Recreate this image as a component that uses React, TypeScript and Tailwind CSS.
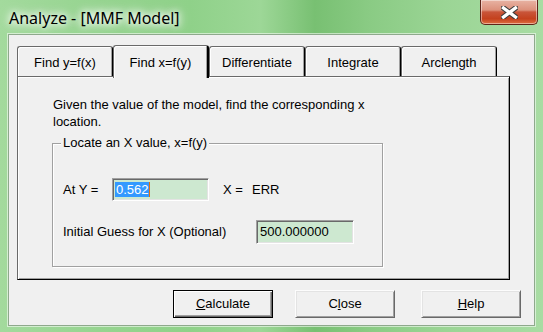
import React from 'react'

const tabs = ['Find y=f(x)', 'Find x=f(y)', 'Differentiate', 'Integrate', 'Arclength']

const CloseGlyph = () => (
  <svg width="17" height="13" viewBox="0 0 17 13">
    <path d="M2.5 2 L14.5 11 M14.5 2 L2.5 11" stroke="#3b3b3b" strokeWidth="5.4" strokeLinecap="square" />
    <path d="M2.5 2 L14.5 11 M14.5 2 L2.5 11" stroke="#ffffff" strokeWidth="3.4" strokeLinecap="square" />
  </svg>
)

const Tab = ({ label, active }: { label: string; active: boolean }) => {
  if (active) {
    return (
      <div className="relative z-10 flex h-[33px] w-[96px] mb-[-2px] items-start justify-center rounded-t-[3px] border-l border-t border-r-2 border-l-[#6a6a6a] border-t-[#6a6a6a] border-r-black bg-[#f0f0f0] pt-[7px] shadow-[inset_1px_1px_0_#fff,inset_-1px_0_0_#a0a0a0]">
        {label}
      </div>
    )
  }
  return (
    <div className="flex h-[30px] w-[96px] items-start justify-center rounded-t-[3px] border-l border-t border-r border-l-[#6a6a6a] border-t-[#6a6a6a] border-r-black bg-[#f0f0f0] pt-[6px] shadow-[inset_1px_1px_0_#fff,inset_-1px_0_0_#a0a0a0]">
      {label}
    </div>
  )
}

const Field = ({ children, className }: { children: React.ReactNode; className: string }) => (
  <div className={`flex items-center border border-t-[#a0a0a0] border-l-[#a0a0a0] border-r-white border-b-white bg-[#cde8d0] pl-[2px] shadow-[inset_1px_1px_0_#696969,inset_-1px_-1px_0_#e3e3e3] ${className}`}>
    {children}
  </div>
)

const Button = ({ children, isDefault }: { children: React.ReactNode; isDefault?: boolean }) => (
  <div
    className={
      isDefault
        ? 'flex h-[28px] w-[100px] items-center justify-center border border-black bg-[#f0f0f0] shadow-[inset_1px_1px_0_#fff,inset_-1px_-1px_0_#696969,inset_-2px_-2px_0_#a0a0a0]'
        : 'flex h-[28px] w-[100px] items-center justify-center border border-t-[#fcfcfc] border-l-[#fcfcfc] border-r-[#696969] border-b-[#696969] bg-[#f0f0f0] shadow-[inset_1px_1px_0_#e3e3e3,inset_-1px_-1px_0_#a0a0a0]'
    }
  >
    {children}
  </div>
)

export default function App() {
  return (
    <div className="flex h-[332px] w-[543px] flex-col bg-[linear-gradient(90deg,#a3da9d_0%,#96d490_18%,#8fd189_35%,#9dd797_48%,#78c072_58%,#8acb84_68%,#9bd595_82%,#a8dca3_100%)] font-['Liberation_Sans',Arial,sans-serif] text-[13px] text-black">
      {/* title bar */}
      <div className="flex h-[34px] items-start justify-between">
        <div className="pl-[9px] pt-[8px] font-['Noto_Sans',sans-serif] text-[16px] leading-[20px] text-black [text-shadow:0_0_6px_#fff,0_0_10px_#fff,0_0_14px_#fff]">
          Analyze - [MMF Model]
        </div>
        <div className="mr-[5px] flex h-[25px] w-[58px] items-center justify-center rounded-b-[5px] border border-t-0 border-[#5e2419] bg-[linear-gradient(to_bottom,#e8b3a4_0%,#dc907b_42%,#c9553a_50%,#c4411e_78%,#de6e40_100%)] shadow-[inset_0_0_0_1px_rgba(255,255,255,0.45)]">
          <CloseGlyph />
        </div>
      </div>

      {/* client area */}
      <div className="mx-[8px] mb-[6px] h-[292px] border border-[#8ea98c] bg-[#f0f0f0] pl-[8px] pt-[11px] shadow-[0_0_0_1px_rgba(255,255,255,0.55)]">
        <div className="flex h-[30px] items-end">
          {tabs.map((t) => (
            <Tab key={t} label={t} active={t === 'Find x=f(y)'} />
          ))}
        </div>

        <div className="h-[204px] w-[493px] border border-t-[#6a6a6a] border-l-[#6a6a6a] border-r-black border-b-black bg-[#f0f0f0] pt-[19px] shadow-[inset_1px_1px_0_#fff,inset_-1px_-1px_0_#a0a0a0]">
          <p className="ml-[35px] leading-[17px]">
            Given the value of the model, find the corresponding x
            <br />
            location.
          </p>

          <div className="relative ml-[34px] mt-[13px] h-[124px] w-[331px] border border-[#a0a0a0] pt-[34px] pl-[10px] shadow-[inset_1px_1px_0_#fff,1px_1px_0_#fff]">
            <span className="absolute -top-[10px] left-[8px] bg-[#f0f0f0] px-[2px] leading-[17px]">
              Locate an X value, x=f(y)
            </span>

            <div className="flex h-[23px] items-center">
              <span className="w-[49px]">At Y =</span>
              <Field className="h-[23px] w-[97px]">
                <span className="bg-[#3399ff] pl-px leading-[15px] text-white">0.562</span>
                <span className="h-[15px] w-px bg-[#e07010]" />
              </Field>
              <span className="ml-[14px] w-[29px]">X =</span>
              <span>ERR</span>
            </div>

            <div className="mt-[19px] flex h-[24px] items-center">
              <span className="w-[193px]">Initial Guess for X (Optional)</span>
              <Field className="h-[24px] w-[98px]">
                <span className="pl-px">500.000000</span>
              </Field>
            </div>
          </div>
        </div>

        <div className="ml-[156px] mt-[10px] flex">
          <Button isDefault>
            <span><u>C</u>alculate</span>
          </Button>
          <div className="ml-[22px]">
            <Button>
              <span>C<u>l</u>ose</span>
            </Button>
          </div>
          <div className="ml-[26px]">
            <Button>
              <span><u>H</u>elp</span>
            </Button>
          </div>
        </div>
      </div>
    </div>
  )
}
